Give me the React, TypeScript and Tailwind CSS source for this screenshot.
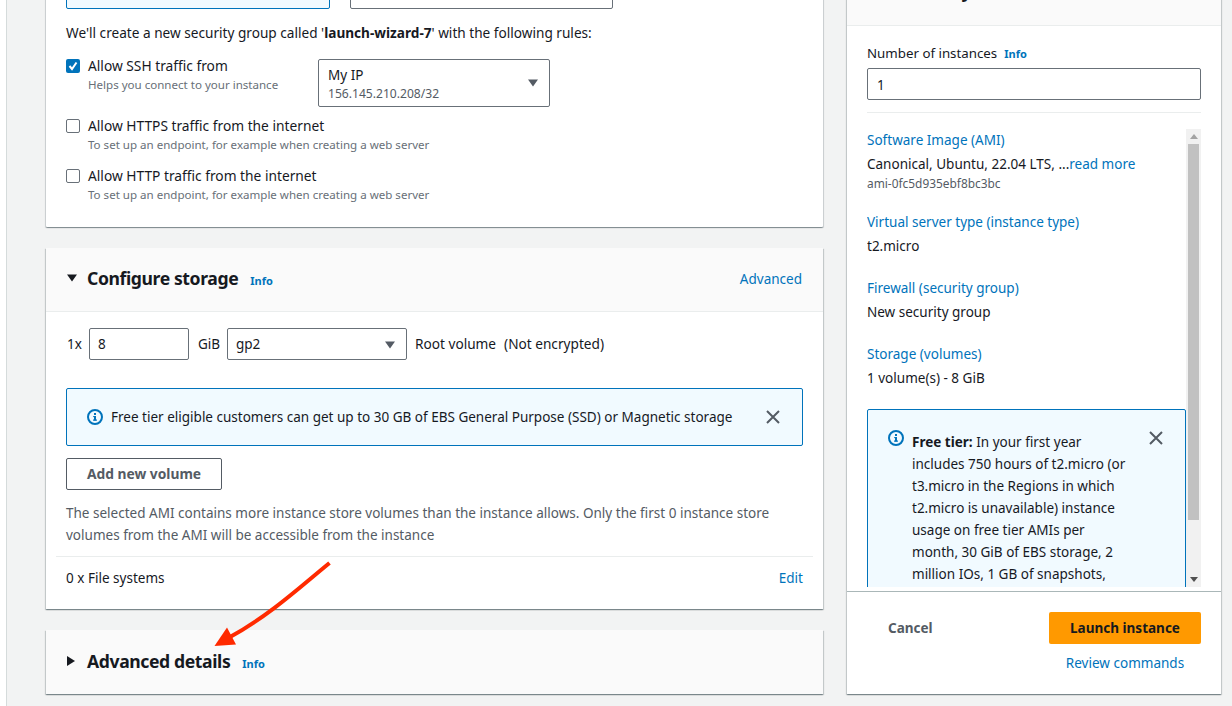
const cardShadow = "shadow-[0_1px_1px_0_rgba(0,28,36,0.3),1px_1px_1px_0_rgba(0,28,36,0.15),-1px_1px_1px_0_rgba(0,28,36,0.15)]";

function InfoLink({ className = "" }: { className?: string }) {
  return <span className={`text-[11px] leading-[16px] font-bold text-[#0073bb] ${className}`}>Info</span>;
}

function InfoIcon() {
  return (
    <svg width="16" height="16" viewBox="0 0 16 16" className="shrink-0">
      <circle cx="8" cy="8" r="7" fill="none" stroke="#0073bb" strokeWidth="2" />
      <rect x="7" y="7" width="2" height="4.5" fill="#0073bb" />
      <rect x="6" y="10.5" width="4" height="1.2" fill="#0073bb" />
      <rect x="6.2" y="7" width="2" height="1.1" fill="#0073bb" />
      <rect x="7" y="4" width="2" height="2" fill="#0073bb" />
    </svg>
  );
}

function CloseIcon() {
  return (
    <svg width="16" height="16" viewBox="0 0 16 16" className="shrink-0">
      <path d="M2 2 L14 14 M14 2 L2 14" fill="none" stroke="#545b64" strokeWidth="2" />
    </svg>
  );
}

function Caret({ dir = "down", color = "#16191f", className = "" }: { dir?: "down" | "right"; color?: string; className?: string }) {
  return dir === "down" ? (
    <svg width="12" height="8" viewBox="0 0 12 8" className={`shrink-0 ${className}`}>
      <path d="M1 0.5 H11 L6 7.5 Z" fill={color} />
    </svg>
  ) : (
    <svg width="10" height="12" viewBox="0 0 10 12" className={`shrink-0 ${className}`}>
      <path d="M1 1 V11 L9 6 Z" fill={color} />
    </svg>
  );
}

function RuleCheckbox({ checked, label, help }: { checked?: boolean; label: string; help: string }) {
  return (
    <div className="flex gap-[8px]">
      {checked ? (
        <span className="w-[14px] h-[14px] mt-[4px] rounded-[2px] bg-[#0073bb] flex items-center justify-center shrink-0">
          <svg width="12" height="12" viewBox="0 0 12 12">
            <path d="M2.5 6 L5 9 L9.5 2.5" fill="none" stroke="#ffffff" strokeWidth="2" />
          </svg>
        </span>
      ) : (
        <span className="w-[14px] h-[14px] mt-[4px] rounded-[2px] border border-[#687078] bg-white shrink-0" />
      )}
      <div>
        <div className="leading-[22px] text-[13.75px]">{label}</div>
        <div className="leading-[16px] text-[11.55px] text-[#687078]">{help}</div>
      </div>
    </div>
  );
}

function SummaryItem({ title, value, sub, more }: { title: string; value: string; sub?: string; more?: string }) {
  return (
    <div className="mb-[20px]">
      <div className="text-[#0073bb] leading-[22px]">{title}</div>
      <div className="leading-[22px] mt-[2px]">
        {value}
        {more && <span className="text-[#0073bb]">{more}</span>}
      </div>
      {sub && <div className="text-[11.9px] leading-[16px] text-[#545b64]">{sub}</div>}
    </div>
  );
}

export default function App() {
  return (
    <div className="h-[706px] w-[1232px] overflow-hidden bg-white pl-[6px] text-[13.53px] text-[#16191f] font-['Noto_Sans',sans-serif] relative">
      <div className="h-full bg-[#f2f3f3] border-l border-[#d5dbdb] pl-[39px] pr-[10px] overflow-hidden">
        <div className="flex items-start gap-[24px] -mt-[40px]">
          {/* Main column */}
          <div className="w-[777px] shrink-0 flex flex-col gap-[21px]">
            {/* Firewall card, scrolled off the top */}
            <div className={`bg-white rounded-b-[1px] ${cardShadow} px-[20px] h-[267px]`}>
              <div className="flex gap-[20px]">
                <div className="w-[264px] h-[49px] rounded-[2px] border border-[#0073bb] bg-[#f1faff]" />
                <div className="w-[263px] h-[49px] rounded-[2px] border border-[#687078] bg-white" />
              </div>
              <p className="mt-[13px] leading-[22px] text-[13.63px]">
                We'll create a new security group called '<b className="font-bold">launch-wizard-7</b>' with the following rules:
              </p>
              <div className="flex mt-[11px]">
                <div className="w-[252px] shrink-0">
                  <RuleCheckbox checked label="Allow SSH traffic from" help="Helps you connect to your instance" />
                </div>
                <div className="w-[232px] h-[48px] mt-[4px] rounded-[2px] border border-[#687078] px-[9px] pt-[4px] flex justify-between relative">
                  <div>
                    <div className="leading-[22px]">My IP</div>
                    <div className="text-[12.1px] leading-[16px] text-[#545b64]">156.145.210.208/32</div>
                  </div>
                  <Caret color="#545b64" className="mt-[15px] mr-[1px]" />
                </div>
              </div>
              <div className="mt-[8px]">
                <RuleCheckbox label="Allow HTTPS traffic from the internet" help="To set up an endpoint, for example when creating a web server" />
              </div>
              <div className="mt-[12px]">
                <RuleCheckbox label="Allow HTTP traffic from the internet" help="To set up an endpoint, for example when creating a web server" />
              </div>
            </div>

            {/* Configure storage */}
            <div className={`bg-white ${cardShadow} h-[361px]`}>
              <div className="h-[64px] bg-[#fafafa] border-b border-[#eaeded] pl-[20px] pr-[21px] flex items-center justify-between">
                <div className="flex items-center -mt-[3px]">
                  <Caret className="mr-[9px]" />
                  <span className="text-[17.6px] tracking-[-0.4px] font-bold leading-[24px]">Configure storage</span>
                  <InfoLink className="ml-[12px] mt-[6px]" />
                </div>
                <span className="text-[#0073bb]">Advanced</span>
              </div>
              <div className="px-[20px]">
                <div className="flex items-center mt-[16px] h-[32px]">
                  <span className="ml-px w-[22px]">1x</span>
                  <div className="w-[100px] h-[32px] rounded-[2px] border border-[#687078] px-[8px] pt-px flex items-center">8</div>
                  <span className="ml-[9px] w-[29px]">GiB</span>
                  <div className="w-[180px] h-[32px] rounded-[2px] border border-[#687078] px-[8px] pt-px flex items-center justify-between">
                    <span>gp2</span>
                    <Caret color="#545b64" className="mr-[2px]" />
                  </div>
                  <span className="ml-[8px] text-[13.65px]">Root volume</span>
                  <span className="ml-[8px] text-[13.65px]">(Not encrypted)</span>
                </div>
                <div className="mt-[28px] h-[58px] rounded-[2px] border border-[#0073bb] bg-[#f1faff] pl-[20px] pr-[21px] flex items-center">
                  <InfoIcon />
                  <span className="ml-[8px] flex-1 pt-px">Free tier eligible customers can get up to 30 GB of EBS General Purpose (SSD) or Magnetic storage</span>
                  <CloseIcon />
                </div>
                <div className="mt-[12px] w-[156px] h-[32px] rounded-[2px] border border-[#545b64] font-bold text-[13.8px] text-[#545b64] pt-px flex items-center justify-center">
                  Add new volume
                </div>
                <p className="mt-[12px] leading-[22px] text-[#545b64]">
                  The selected AMI contains more instance store volumes than the instance allows. Only the first 0 instance store volumes from the AMI will be accessible from the instance
                </p>
              </div>
              <div className="mx-[10px] mt-[10px] border-t border-[#eaeded] px-[10px] h-[44px] flex items-center justify-between">
                <span>0 x File systems</span>
                <span className="text-[#0073bb]">Edit</span>
              </div>
            </div>

            {/* Advanced details */}
            <div className={`bg-[#fafafa] ${cardShadow} h-[64px] pl-[20px] flex items-center`}>
              <Caret dir="right" className="mr-[11px] -mt-[2px]" />
              <span className="text-[17.6px] tracking-[-0.4px] font-bold leading-[24px] -mt-[3px]">Advanced details</span>
              <InfoLink className="ml-[12px] mt-[3px]" />
            </div>
          </div>

          {/* Summary panel */}
          <div className={`w-[374px] shrink-0 h-[734px] bg-white ${cardShadow} flex flex-col`}>
            <div className="h-[66px] shrink-0 bg-[#fafafa] border-b border-[#eaeded] pl-[43px] pt-[19px]">
              <span className="text-[17.6px] tracking-[-0.4px] font-bold leading-[24px]">Summary</span>
            </div>
            <div className="px-[20px] pt-[16px] shrink-0">
              <div className="leading-[22px] flex items-center text-[13.3px]">
                Number of instances
                <InfoLink className="ml-[7px] mt-px" />
              </div>
              <div className="h-[32px] mt-[4px] rounded-[2px] border border-[#687078] px-[9px] pt-[2px] flex items-center">1</div>
              <div className="mt-[12px] border-t border-[#eaeded]" />
            </div>
            <div className="mx-[20px] mt-[16px] h-[458px] shrink-0 flex overflow-hidden">
              <div className="w-[319px] shrink-0">
                <SummaryItem title="Software Image (AMI)" value="Canonical, Ubuntu, 22.04 LTS, ..." more="read more" sub="ami-0fc5d935ebf8bc3bc" />
                <SummaryItem title="Virtual server type (instance type)" value="t2.micro" />
                <SummaryItem title="Firewall (security group)" value="New security group" />
                <SummaryItem title="Storage (volumes)" value="1 volume(s) - 8 GiB" />
                <div className="rounded-[2px] border border-[#0073bb] bg-[#f1faff] pl-[20px] pr-[21px] pt-[20px] flex">
                  <InfoIcon />
                  <div className="ml-[8px] w-[220px] leading-[22px] mt-px">
                    <b className="font-bold">Free tier:</b> In your first year includes 750 hours of t2.micro (or t3.micro in the Regions in which t2.micro is unavailable) instance usage on free tier AMIs per month, 30 GiB of EBS storage, 2 million IOs, 1 GB of snapshots, and 100 GB of bandwidth to the internet.
                  </div>
                  <span className="ml-auto"><CloseIcon /></span>
                </div>
              </div>
              <div className="w-[15px] shrink-0 bg-[#f1f1f1] flex flex-col items-center">
                <svg width="8" height="5" viewBox="0 0 8 5" className="mt-[5px] shrink-0">
                  <path d="M0 5 L4 0 L8 5 Z" fill="#a3a3a3" />
                </svg>
                <div className="w-[11px] h-[376px] mt-[5px] bg-[#c1c1c1] shrink-0" />
                <svg width="8" height="5" viewBox="0 0 8 5" className="mt-auto mb-[5px] shrink-0">
                  <path d="M0 0 L8 0 L4 5 Z" fill="#505050" />
                </svg>
              </div>
            </div>
            <div className="mt-[4px] flex-1 border-t border-[#aab7b8] px-[20px] pt-[20px]">
              <div className="flex justify-between items-center">
                <span className="ml-[21px] font-bold text-[#545b64] pt-px">Cancel</span>
                <div className="w-[152px] h-[32px] rounded-[2px] bg-[#ff9900] font-bold pt-px flex items-center justify-center">Launch instance</div>
              </div>
              <div className="flex justify-end mt-[8px]">
                <span className="w-[152px] text-center leading-[22px] text-[#0073bb]">Review commands</span>
              </div>
            </div>
          </div>
        </div>
      </div>

      {/* Red annotation arrow */}
      <svg width="140" height="100" viewBox="0 0 140 100" className="absolute left-[200px] top-[555px] pointer-events-none">
        <path d="M129.500 8 C 100 32, 70 60, 30 82" fill="none" stroke="#ff2a00" strokeWidth="4" />
        <path d="M14.500 91 L27 72.500 L36 89.500 Z" fill="#ff2a00" />
      </svg>
    </div>
  );
}
